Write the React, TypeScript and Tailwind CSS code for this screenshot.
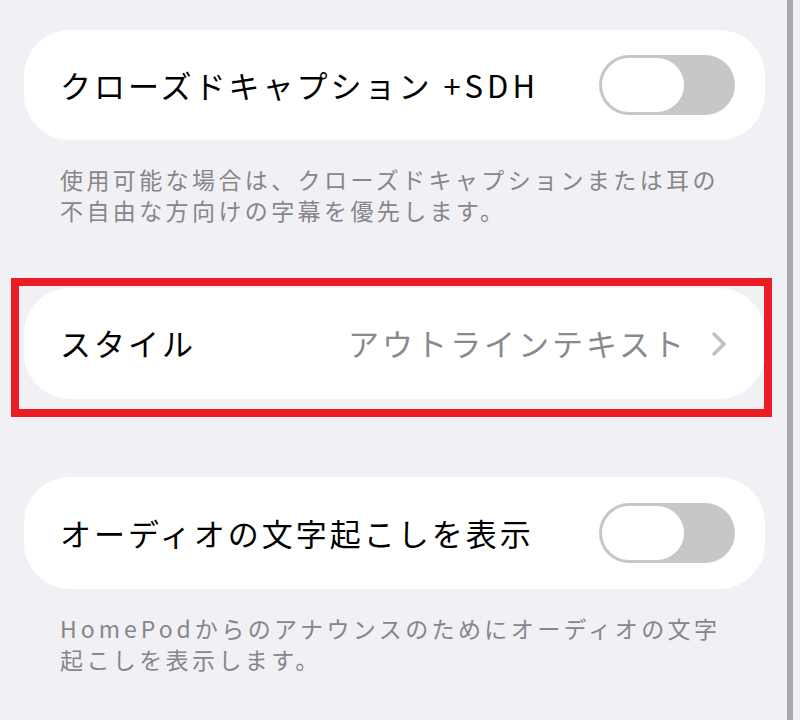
const font = { fontFamily: '"Noto Sans CJK JP", "Noto Sans", sans-serif' };

function Toggle() {
  return (
    <div className="flex h-[60px] w-[136px] shrink-0 items-center rounded-full bg-[#c7c7c9] pl-[3px]">
      <div className="h-[54px] w-[82px] rounded-full bg-white" />
    </div>
  );
}

function Footer({ lines }: { lines: React.ReactNode[] }) {
  return (
    <div className="mt-[24px] pl-[36px] text-[23px] leading-[31px] tracking-[3.4px] text-[#86868b]">
      {lines.map((l, i) => (
        <div key={i} className="whitespace-nowrap">{l}</div>
      ))}
    </div>
  );
}

export default function App() {
  return (
    <div className="flex h-[720px] w-[800px] bg-[#f1f0f5]" style={font}>
      <div className="w-[787px] pl-[24px] pt-[30px]">
        <div className="flex h-[110px] w-[741px] items-center justify-between rounded-[46px] bg-white pl-[36px] pr-[30px]">
          <span className="whitespace-nowrap text-[31px] tracking-[3px] text-black">
            クローズドキャプション<span className="tracking-[4px]"> +SDH</span>
          </span>
          <Toggle />
        </div>
        <Footer lines={['使用可能な場合は、クローズドキャプションまたは耳の', '不自由な方向けの字幕を優先します。']} />

        <div className="relative mt-[62px] w-[741px]">
          <div className="flex h-[111px] items-center justify-between rounded-[46px] bg-white pl-[36px] pr-[38px]">
            <span className="whitespace-nowrap text-[31px] tracking-[3px] text-black">スタイル</span>
            <div className="flex items-center gap-[24px]">
              <span className="whitespace-nowrap text-[31px] tracking-[3px] text-[#8a8a8e]">アウトラインテキスト</span>
              <svg width="16" height="26" viewBox="0 0 16 26" fill="none">
                <path d="M3 3l10 10L3 23" stroke="#c0c0c4" strokeWidth="3.5" strokeLinecap="round" strokeLinejoin="round" />
              </svg>
            </div>
          </div>
          <div className="pointer-events-none absolute -bottom-[18px] -left-[13px] -right-[7px] -top-[10px] border-[8px] border-[#ec1c24]" />
        </div>

        <div className="mt-[78px] flex h-[112px] w-[741px] items-center justify-between rounded-[46px] bg-white pl-[36px] pr-[30px]">
          <span className="whitespace-nowrap text-[31px] tracking-[3px] text-black">オーディオの文字起こしを表示</span>
          <Toggle />
        </div>
        <Footer
          lines={[
            <>
              <span className="tracking-[4px]">HomePod</span>からのアナウンスのためにオーディオの文字
            </>,
            '起こしを表示します。',
          ]}
        />
      </div>
      <div className="h-full w-[6px] bg-[#a9a9ab]" />
    </div>
  );
}
